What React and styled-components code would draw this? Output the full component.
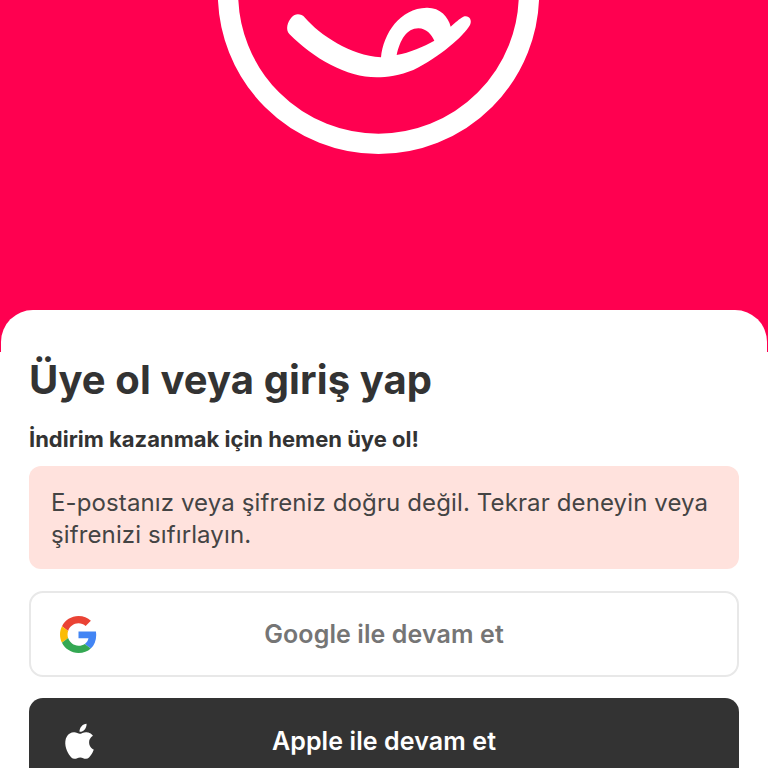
import React from "react";
import styled, { createGlobalStyle } from "styled-components";

const GlobalStyle = createGlobalStyle`
  html, body {
    margin: 0;
    padding: 0;
    background: #fff;
    height: 768px;
    overflow: hidden;
  }
  * {
    box-sizing: border-box;
  }
`;

const Page = styled.div`
  width: 768px;
  height: 768px;
  overflow: hidden;
  font-family: Inter, "Noto Sans", sans-serif;
  color: #333;
`;

const Hero = styled.div`
  height: 352px;
  background: #ff0050;
  padding-left: 218px;
`;

const Logo = styled.svg`
  display: block;
  width: 322px;
  height: 155px;
`;

const Sheet = styled.div`
  margin: -42px 1px 0;
  height: 460px;
  padding: 43px 28px 0;
  background: #fff;
  border-radius: 32px 32px 0 0;
`;

const Title = styled.h1`
  margin: 0;
  font-size: 40px;
  line-height: 54px;
  font-weight: 700;
  letter-spacing: 0.1px;
`;

const Subtitle = styled.p`
  margin: 19px 0 0;
  font-size: 22px;
  line-height: 26px;
  font-weight: 700;
`;

const Alert = styled.div`
  margin: 14px 0 22px;
  height: 103px;
  padding: 21px 22px;
  background: #ffe2dd;
  border-radius: 12px;
  font-size: 24px;
  line-height: 32px;
  letter-spacing: 0.12px;
  color: #444;
`;

const SocialButton = styled.button`
  display: grid;
  grid-template-columns: 1fr auto 1fr;
  align-items: center;
  justify-items: start;
  width: 100%;
  height: 86px;
  margin-bottom: 21px;
  padding: 0 ${(p) => (p.$dark ? 31 : 29)}px;
  border-radius: 14px;
  border: ${(p) => (p.$dark ? "none" : "2px solid #e8e8e8")};
  background: ${(p) => (p.$dark ? "#333" : "#fff")};
  color: ${(p) => (p.$dark ? "#fff" : "#757575")};
  font-family: inherit;
  font-size: 25px;
  font-weight: 600;
  letter-spacing: 0.1px;
`;

const ButtonIcon = styled.svg`
  display: block;
  width: ${(p) => p.$size}px;
  height: ${(p) => p.$size}px;
`;

function GoogleIcon() {
  return (
    <ButtonIcon $size={37} viewBox="0 0 48 48">
      <path fill="#EA4335" d="M24 9.5c3.54 0 6.71 1.22 9.21 3.6l6.85-6.85C35.9 2.38 30.47 0 24 0 14.62 0 6.51 5.38 2.56 13.22l7.98 6.19C12.43 13.72 17.74 9.5 24 9.5z" />
      <path fill="#4285F4" d="M46.98 24.55c0-1.57-.15-3.09-.38-4.55H24v9.02h12.94c-.58 2.96-2.26 5.48-4.78 7.18l7.73 6c4.51-4.18 7.09-10.36 7.09-17.65z" />
      <path fill="#FBBC05" d="M10.53 28.59c-.48-1.45-.76-2.99-.76-4.59s.27-3.14.76-4.59l-7.98-6.19C.92 16.46 0 20.12 0 24c0 3.88.92 7.54 2.56 10.78l7.97-6.19z" />
      <path fill="#34A853" d="M24 48c6.48 0 11.93-2.13 15.89-5.81l-7.73-6c-2.15 1.45-4.92 2.3-8.16 2.3-6.26 0-11.57-4.22-13.47-9.91l-7.98 6.19C6.51 42.62 14.62 48 24 48z" />
    </ButtonIcon>
  );
}

function AppleIcon() {
  return (
    <ButtonIcon $size={41} viewBox="0 0 24 24">
      <path fill="#fff" d="M17.05 12.54c-.03-2.6 2.12-3.85 2.22-3.91-1.21-1.77-3.09-2.01-3.76-2.04-1.6-.16-3.12.94-3.93.94-.81 0-2.06-.92-3.39-.89-1.74.03-3.35 1.01-4.25 2.57-1.81 3.14-.46 7.79 1.3 10.34.86 1.25 1.89 2.65 3.24 2.6 1.3-.05 1.79-.84 3.36-.84 1.57 0 2.01.84 3.38.81 1.4-.03 2.28-1.27 3.14-2.52.99-1.45 1.4-2.85 1.42-2.92-.03-.01-2.72-1.04-2.75-4.14zM14.47 4.91c.72-.87 1.2-2.08 1.07-3.29-1.03.04-2.28.69-3.02 1.55-.66.77-1.24 2-1.09 3.18 1.15.09 2.32-.58 3.04-1.44z" />
    </ButtonIcon>
  );
}

export default function App() {
  return (
    <Page>
      <GlobalStyle />
      <Hero>
        <Logo viewBox="54 0 966 465">
          <circle cx="535.5" cy="-20" r="451.5" fill="none" stroke="#fff" strokeWidth="61" />
          {/* smile and tongue are one shape, the hole is cut out by evenodd */}
          <path
            fill="#fff"
            fillRule="evenodd"
            d="M275 52 C285 40 303 40 315 53 C360 105 450 165 543 172 C550 100 600 25 680 23 C720 22 745 50 752 80 C765 68 780 55 790 50 C805 44 818 58 810 75 C790 110 720 170 640 210 C600 226 560 232 530 232 C440 232 340 175 268 102 C256 90 262 66 275 52 Z M590 165 C600 120 620 85 655 85 C680 85 695 105 703 122 C670 140 630 158 590 165 Z"
          />
        </Logo>
      </Hero>
      <Sheet>
        <Title>Üye ol veya giriş yap</Title>
        <Subtitle>İndirim kazanmak için hemen üye ol!</Subtitle>
        <Alert>
          E-postanız veya şifreniz doğru değil. Tekrar deneyin veya şifrenizi sıfırlayın.
        </Alert>
        <SocialButton>
          <GoogleIcon />
          <span>Google ile devam et</span>
        </SocialButton>
        <SocialButton $dark>
          <AppleIcon />
          <span>Apple ile devam et</span>
        </SocialButton>
      </Sheet>
    </Page>
  );
}
